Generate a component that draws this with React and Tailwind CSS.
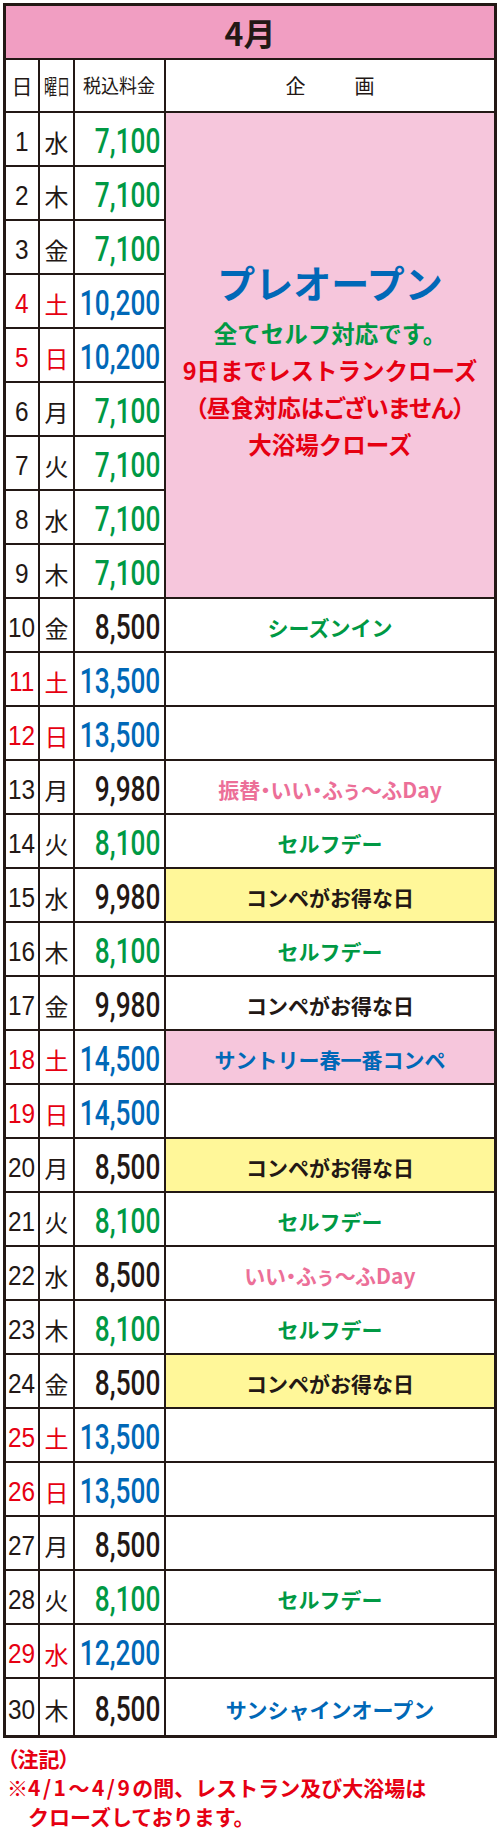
const rows = [
  { d: 1, w: '水', p: '7,100', pc: 'g' },
  { d: 2, w: '木', p: '7,100', pc: 'g' },
  { d: 3, w: '金', p: '7,100', pc: 'g' },
  { d: 4, w: '土', p: '10,200', pc: 'b', red: true },
  { d: 5, w: '日', p: '10,200', pc: 'b', red: true },
  { d: 6, w: '月', p: '7,100', pc: 'g' },
  { d: 7, w: '火', p: '7,100', pc: 'g' },
  { d: 8, w: '水', p: '7,100', pc: 'g' },
  { d: 9, w: '木', p: '7,100', pc: 'g' },
  { d: 10, w: '金', p: '8,500', pc: 'k', ev: 'シーズンイン', ec: 'g' },
  { d: 11, w: '土', p: '13,500', pc: 'b', red: true },
  { d: 12, w: '日', p: '13,500', pc: 'b', red: true },
  { d: 13, w: '月', p: '9,980', pc: 'k', ev: '振替・いい・ふぅ〜ふDay', ec: 'p' },
  { d: 14, w: '火', p: '8,100', pc: 'g', ev: 'セルフデー', ec: 'g' },
  { d: 15, w: '水', p: '9,980', pc: 'k', ev: 'コンペがお得な日', ec: 'k', bg: 'y' },
  { d: 16, w: '木', p: '8,100', pc: 'g', ev: 'セルフデー', ec: 'g' },
  { d: 17, w: '金', p: '9,980', pc: 'k', ev: 'コンペがお得な日', ec: 'k' },
  { d: 18, w: '土', p: '14,500', pc: 'b', red: true, ev: 'サントリー春一番コンペ', ec: 'b', bg: 'p' },
  { d: 19, w: '日', p: '14,500', pc: 'b', red: true },
  { d: 20, w: '月', p: '8,500', pc: 'k', ev: 'コンペがお得な日', ec: 'k', bg: 'y' },
  { d: 21, w: '火', p: '8,100', pc: 'g', ev: 'セルフデー', ec: 'g' },
  { d: 22, w: '水', p: '8,500', pc: 'k', ev: 'いい・ふぅ〜ふDay', ec: 'p' },
  { d: 23, w: '木', p: '8,100', pc: 'g', ev: 'セルフデー', ec: 'g' },
  { d: 24, w: '金', p: '8,500', pc: 'k', ev: 'コンペがお得な日', ec: 'k', bg: 'y' },
  { d: 25, w: '土', p: '13,500', pc: 'b', red: true },
  { d: 26, w: '日', p: '13,500', pc: 'b', red: true },
  { d: 27, w: '月', p: '8,500', pc: 'k' },
  { d: 28, w: '火', p: '8,100', pc: 'g', ev: 'セルフデー', ec: 'g' },
  { d: 29, w: '水', p: '12,200', pc: 'b', red: true },
  { d: 30, w: '木', p: '8,500', pc: 'k', ev: 'サンシャインオープン', ec: 'b' },
];

const textColor = {
  g: 'text-[#009944]',
  b: 'text-[#0068b7]',
  k: 'text-[#231815]',
  p: 'text-[#ec6f98]',
};

const bgColor = {
  y: 'bg-[#fff799]',
  p: 'bg-[#f6c6dc]',
};

function Cell({ last, right = true, className = '', children }) {
  return (
    <div
      className={`flex items-center pt-[5px] border-[#231815] ${right ? 'border-r-2' : ''} ${
        last ? '' : 'border-b-2'
      } ${className}`}
    >
      {children}
    </div>
  );
}

export default function App() {
  return (
    <div className="w-[500px] bg-white font-['Noto_Sans_CJK_JP',sans-serif] text-[#231815]">
      <div className="ml-[3px] mt-[3px] w-[494px] border-[3px] border-[#231815]">
        <div className="grid grid-cols-[34px_35px_91px_1fr] grid-rows-[54px_53px_repeat(29,54px)_56px]">
          {/* month title */}
          <div className="col-span-4 flex items-center justify-center border-b-2 border-[#231815] bg-[#f19ec2]">
            <span className="text-[32px] font-bold leading-none">4月</span>
          </div>

          {/* column heads */}
          <div className="flex items-center justify-center border-b-2 border-r-2 border-[#231815] text-[21px]">日</div>
          <div className="flex items-center justify-center border-b-2 border-r-2 border-[#231815]">
            <span className="inline-block scale-x-[0.62] whitespace-nowrap text-[21px]">曜日</span>
          </div>
          <div className="flex items-center justify-center border-b-2 border-r-2 border-[#231815]">
            <span className="inline-block scale-x-95 whitespace-nowrap text-[19px]">税込料金</span>
          </div>
          <div className="flex items-center justify-center gap-[49px] border-b-2 border-[#231815] text-[20px]">
            <span>企</span>
            <span>画</span>
          </div>

          {rows.map((r, i) => {
            const last = i === rows.length - 1;
            return [
              <Cell key={`d${r.d}`} last={last} className="justify-center">
                <span
                  className={`inline-block scale-x-[0.87] font-['Liberation_Sans',sans-serif] text-[28px] leading-none ${
                    r.red ? 'text-[#e60012]' : ''
                  }`}
                >
                  {r.d}
                </span>
              </Cell>,
              <Cell key={`w${r.d}`} last={last} className="justify-center">
                <span className={`text-[24px] leading-none ${r.red ? 'text-[#e60012]' : ''}`}>{r.w}</span>
              </Cell>,
              <Cell key={`p${r.d}`} last={last} className="justify-end pr-[4px]">
                <span
                  className={`inline-block shrink-0 origin-right scale-x-[0.75] whitespace-nowrap font-['Roboto',sans-serif] text-[35px] font-medium leading-none ${textColor[r.pc]}`}
                >
                  {r.p}
                </span>
              </Cell>,
              i === 0 ? (
                <div
                  key="pre"
                  className="col-start-4 row-span-9 flex flex-col items-center justify-center border-b-2 border-[#231815] bg-[#f6c6dc] pt-[12px] font-bold"
                >
                  <div className="mb-[11px] text-[38px] leading-[44px] text-[#0068b7]">プレオープン</div>
                  <div className="text-[23.5px] leading-[37px] text-[#009944]">全てセルフ対応です。</div>
                  <div className="text-[23.5px] leading-[37px] text-[#e60012]">9日までレストランクローズ</div>
                  <div className="text-[23.5px] leading-[37px] text-[#e60012] [font-feature-settings:'palt']">
                    （昼食対応はございません）
                  </div>
                  <div className="text-[23.5px] leading-[37px] text-[#e60012]">大浴場クローズ</div>
                </div>
              ) : i < 9 ? null : (
                <Cell
                  key={`e${r.d}`}
                  last={last}
                  right={false}
                  className={`justify-center ${r.bg ? bgColor[r.bg] : ''}`}
                >
                  {r.ev && (
                    <span
                      className={`text-[21px] font-bold leading-none ${textColor[r.ec]} ${
                        r.ec === 'p' ? "[font-feature-settings:'palt']" : ''
                      }`}
                    >
                      {r.ev}
                    </span>
                  )}
                </Cell>
              ),
            ];
          })}
        </div>
      </div>

      {/* note */}
      <div className="pl-[7px] pt-[6px] text-[21px] font-bold leading-[29px] text-[#e60012]">
        <div className="[font-feature-settings:'palt']">（注記）</div>
        <div className="whitespace-nowrap">
          ※<span className="tracking-[2.5px]">4/1～4/9</span>の間、レストラン及び大浴場は
        </div>
        <div className="pl-[21px]">クローズしております。</div>
      </div>
    </div>
  );
}
